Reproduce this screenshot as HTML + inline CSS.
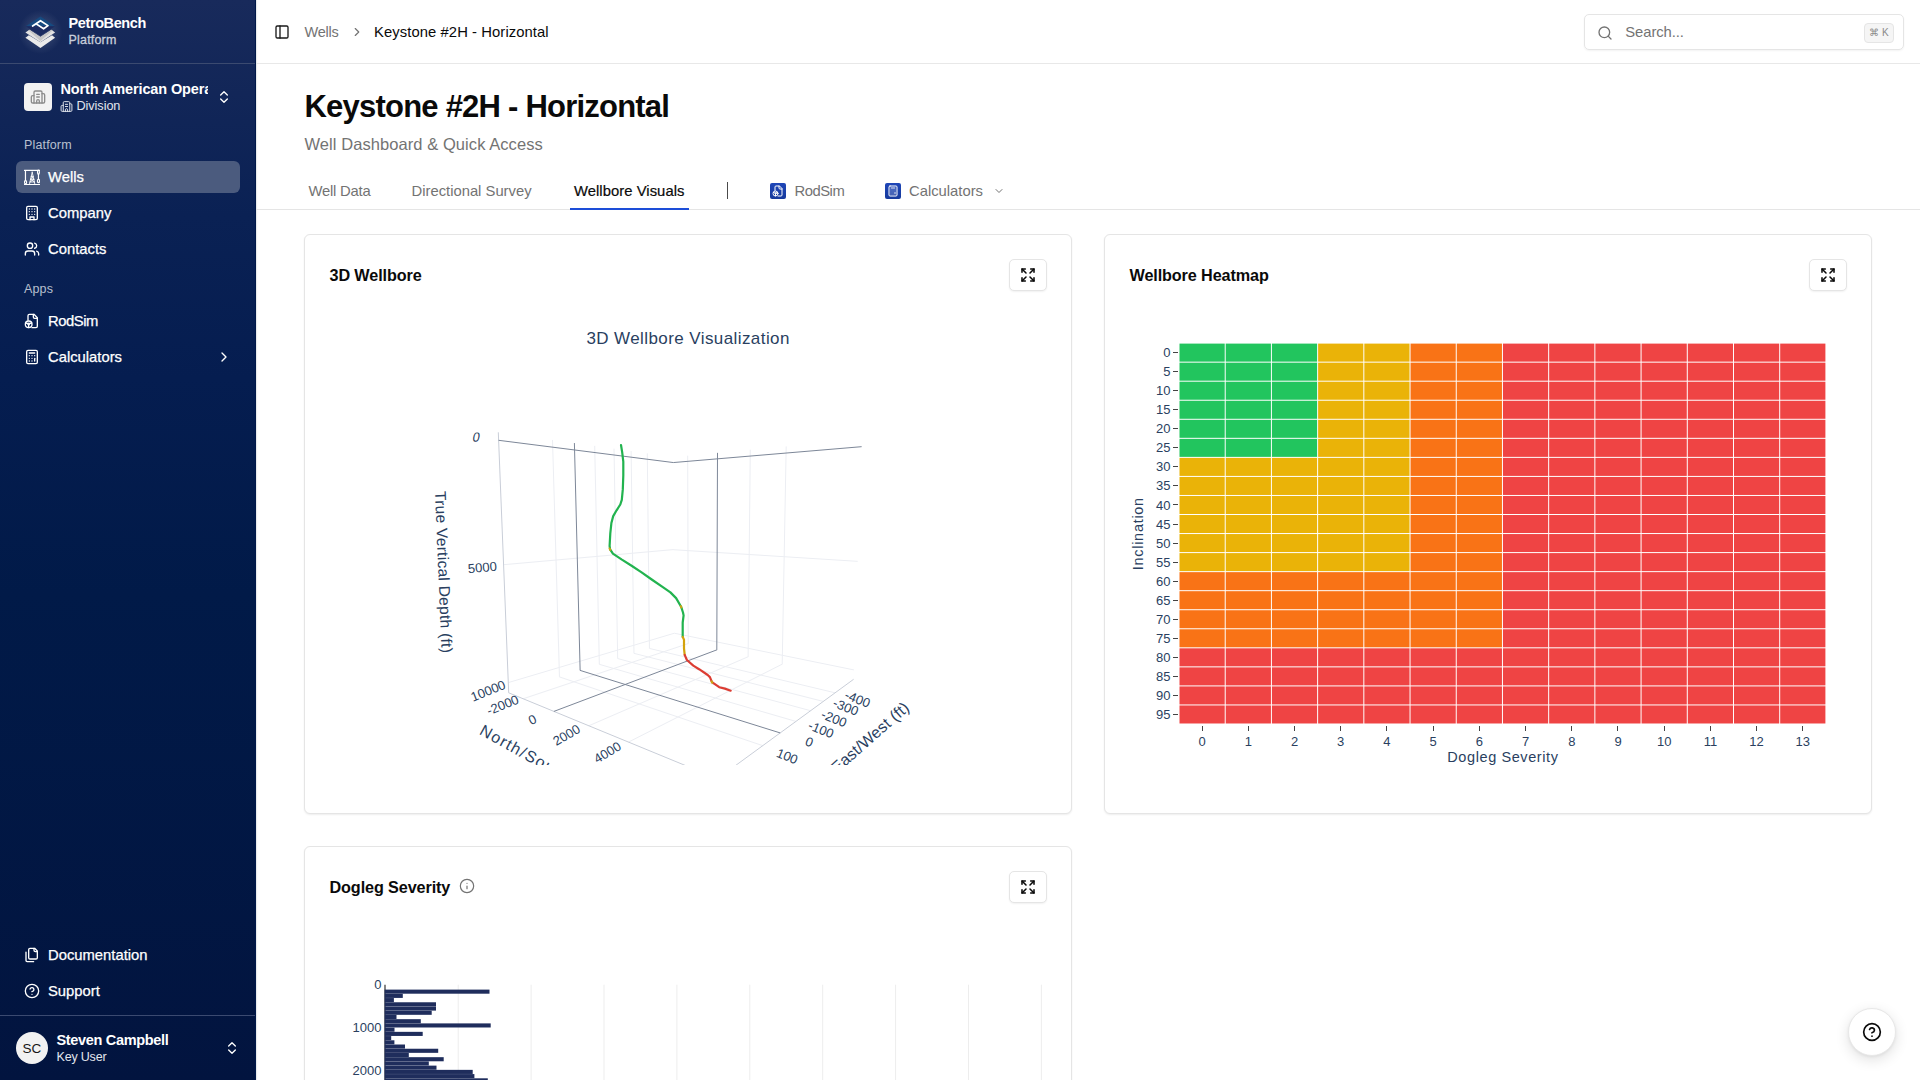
<!DOCTYPE html><html><head><meta charset="utf-8"><style>
*{box-sizing:border-box;margin:0;padding:0}
html,body{width:1920px;height:1080px;overflow:hidden;background:#fff;font-family:"Liberation Sans",sans-serif;color:#0a0a0a}
.abs{position:absolute}
svg{display:block}
#sb{position:absolute;left:0;top:0;width:256px;height:1080px;background:linear-gradient(180deg,#182a5b 0%,#0a2154 20%,#051d50 35%,#011a48 55%,#02143f 100%)}
#sbr{position:absolute;left:255px;top:0;width:1px;height:1080px;background:#001849;box-shadow:1px 0 1px rgba(20,30,60,.12)}
.sbsep{position:absolute;left:0;width:255px;height:1px;background:#3b4a70}
.nav{position:absolute;left:16px;width:224px;height:32px;border-radius:6px;color:#fff}
.ntx{position:absolute;left:48px;font-size:14.8px;letter-spacing:0;line-height:16px;color:#fff;white-space:nowrap;-webkit-text-stroke:.25px #fff}
.grp{position:absolute;left:24px;font-size:12.5px;letter-spacing:.15px;color:#b9c0cf;line-height:14px}
.card{position:absolute;background:#fff;border:1px solid #e5e5e5;border-radius:6px;box-shadow:0 1px 2px rgba(0,0,0,.07)}
.ctitle{position:absolute;font-size:16.2px;letter-spacing:-.11px;font-weight:700;line-height:18px;color:#0a0a0a;white-space:nowrap}
.xbtn{position:absolute;width:38px;height:32px;border:1px solid #e5e5e5;border-radius:5px;background:#fff;box-shadow:0 1px 2px rgba(0,0,0,.06)}
.tab{position:absolute;top:183px;font-size:14.8px;line-height:17px;color:#737373;white-space:nowrap}
</style></head><body>
<div id="sb"></div><div id="sbr"></div>
<svg class="abs" style="left:12px;top:6px" width="56" height="52" viewBox="12 6 56 52">
<defs><radialGradient id="glow" cx="40.5" cy="32" r="22" gradientUnits="userSpaceOnUse"><stop offset="0" stop-color="#ffffff" stop-opacity=".22"/><stop offset=".6" stop-color="#ffffff" stop-opacity=".08"/><stop offset="1" stop-color="#ffffff" stop-opacity="0"/></radialGradient></defs>
<circle cx="40.5" cy="32" r="22" fill="url(#glow)"/>
<polygon points="25.4,37.7 28.9,35.3 40.45,42.3 52,35.3 55.1,37.7 40.45,47.9" fill="#ebebeb"/>
<polygon points="25.4,32.4 29.4,29.7 40.45,36.9 51.5,29.7 55.1,32.4 40.45,42.2" fill="#e2e2e2"/>
<polygon points="29.4,29.7 40.45,36.9 51.5,29.7 52.5,30.4 40.45,41 28.4,30.4" fill="#c6c6c6"/>
<polygon points="40.45,16.5 55.1,26.3 25.8,26.3" fill="#164a80"/>
<polygon points="25.8,26.3 55.1,26.3 40.45,36.1" fill="#1b2b60"/>
<polyline points="32.6,26 40.5,20.7 48,25.6 43.6,28.8 36.6,24.1" fill="none" stroke="#fff" stroke-width="1.7" stroke-linejoin="round" stroke-linecap="round"/>
</svg>
<div class="abs" style="left:68.5px;top:15px;font-size:14.5px;font-weight:700;letter-spacing:-.39px;color:#fff;line-height:16px">PetroBench</div>
<div class="abs" style="left:68.5px;top:33.4px;font-size:12.5px;letter-spacing:.19px;color:#c8cedb;-webkit-text-stroke:.3px #c8cedb;line-height:14px">Platform</div>
<div class="sbsep" style="top:63px"></div>
<div class="abs" style="left:24px;top:83px;width:28px;height:28px;border-radius:4px;background:#f2f2f2"></div>
<svg class="abs" style="left:30px;top:89px" width="16" height="16" viewBox="0 0 24 24" fill="none" stroke="#8c8c8c" stroke-width="2" stroke-linecap="round" stroke-linejoin="round" ><path d="M10 12h4"/><path d="M10 8h4"/><path d="M14 21v-3a2 2 0 0 0-4 0v3"/><path d="M6 10H4a2 2 0 0 0-2 2v7a2 2 0 0 0 2 2h16a2 2 0 0 0 2-2V9a2 2 0 0 0-2-2h-2"/><path d="M6 21V5a2 2 0 0 1 2-2h8a2 2 0 0 1 2 2v16"/></svg>
<div class="abs" style="left:60.5px;top:81.3px;width:147.5px;overflow:hidden;white-space:nowrap;font-size:14.5px;font-weight:700;letter-spacing:-.12px;color:#fff;line-height:16px">North American Operations</div>
<svg class="abs" style="left:60px;top:100px" width="13" height="13" viewBox="0 0 24 24" fill="none" stroke="#dfe3ea" stroke-width="1.8" stroke-linecap="round" stroke-linejoin="round" ><path d="M10 12h4"/><path d="M10 8h4"/><path d="M14 21v-3a2 2 0 0 0-4 0v3"/><path d="M6 10H4a2 2 0 0 0-2 2v7a2 2 0 0 0 2 2h16a2 2 0 0 0 2-2V9a2 2 0 0 0-2-2h-2"/><path d="M6 21V5a2 2 0 0 1 2-2h8a2 2 0 0 1 2 2v16"/></svg>
<div class="abs" style="left:76.5px;top:98.5px;font-size:12.7px;letter-spacing:-.07px;color:#e2e6ee;line-height:14px">Division</div>
<svg class="abs" style="left:216px;top:89px" width="16" height="16" viewBox="0 0 24 24" fill="none" stroke="#fff" stroke-width="2" stroke-linecap="round" stroke-linejoin="round" ><path d="m7 15 5 5 5-5"/><path d="m7 9 5-5 5 5"/></svg>
<div class="grp" style="top:138.3px">Platform</div>
<div class="nav" style="top:161px;background:#4b5b7e"></div>
<svg class="abs" style="left:24px;top:169px" width="16" height="16" viewBox="0 0 24 24" fill="none" stroke="#fff" stroke-width="1.8" stroke-linecap="round" stroke-linejoin="round" ><path d="M0.5 2.2h23.5"/><path d="M2.2 2.5v14.8"/><ellipse cx="2.3" cy="19.8" rx="1.6" ry="2.4"/><ellipse cx="21.7" cy="4.8" rx="1.4" ry="3"/><path d="M21.7 7.8v7.6"/><ellipse cx="21.7" cy="18" rx="1.6" ry="2.6"/><path d="M12.3 4.7 8.3 22.3M12.3 4.7 16.2 22.3M10.9 11h2.8M9.9 15.5h4.8M9 19.5h6.6M10.9 11l3.8 4.5M13.7 11l-3.8 4.5M9.9 15.5l5.7 4M14.7 15.5l-5.7 4" stroke-width="1.3"/><path d="M0.5 23.3h23.5"/></svg>
<div class="ntx" style="top:169px;letter-spacing:0">Wells</div>
<svg class="abs" style="left:24px;top:205px" width="16" height="16" viewBox="0 0 24 24" fill="none" stroke="#fff" stroke-width="2" stroke-linecap="round" stroke-linejoin="round" ><rect width="16" height="20" x="4" y="2" rx="2" ry="2"/><path d="M9 22v-4h6v4"/><path d="M8 6h.01"/><path d="M16 6h.01"/><path d="M12 6h.01"/><path d="M12 10h.01"/><path d="M12 14h.01"/><path d="M16 10h.01"/><path d="M16 14h.01"/><path d="M8 10h.01"/><path d="M8 14h.01"/></svg>
<div class="ntx" style="top:205px;letter-spacing:0">Company</div>
<svg class="abs" style="left:24px;top:241px" width="16" height="16" viewBox="0 0 24 24" fill="none" stroke="#fff" stroke-width="2" stroke-linecap="round" stroke-linejoin="round" ><path d="M16 21v-2a4 4 0 0 0-4-4H6a4 4 0 0 0-4 4v2"/><circle cx="9" cy="7" r="4"/><path d="M22 21v-2a4 4 0 0 0-3-3.87"/><path d="M16 3.13a4 4 0 0 1 0 7.75"/></svg>
<div class="ntx" style="top:241px;letter-spacing:0">Contacts</div>
<svg class="abs" style="left:24px;top:313px" width="16" height="16" viewBox="0 0 24 24" fill="none" stroke="#fff" stroke-width="2" stroke-linecap="round" stroke-linejoin="round" ><path d="M12 22h6a2 2 0 0 0 2-2V7l-5-5H8a2 2 0 0 0-2 2v7"/><path d="M14 2v4a2 2 0 0 0 2 2h4"/><circle cx="7" cy="17" r="5"/><circle cx="7" cy="16.5" r="1.2"/><path d="M7 17.7v4.1M5.9 16 2.6 15M8.1 16l3.3-1"/></svg>
<div class="ntx" style="top:313px;letter-spacing:-.45px">RodSim</div>
<svg class="abs" style="left:24px;top:349px" width="16" height="16" viewBox="0 0 24 24" fill="none" stroke="#fff" stroke-width="2" stroke-linecap="round" stroke-linejoin="round" ><rect width="16" height="20" x="4" y="2" rx="2"/><line x1="8" x2="16" y1="6" y2="6"/><line x1="16" x2="16" y1="14" y2="18"/><path d="M16 10h.01"/><path d="M12 10h.01"/><path d="M8 10h.01"/><path d="M12 14h.01"/><path d="M8 14h.01"/><path d="M12 18h.01"/><path d="M8 18h.01"/></svg>
<div class="ntx" style="top:349px;letter-spacing:0">Calculators</div>
<svg class="abs" style="left:24px;top:947px" width="16" height="16" viewBox="0 0 24 24" fill="none" stroke="#fff" stroke-width="2" stroke-linecap="round" stroke-linejoin="round" ><path d="M20 7h-3a2 2 0 0 1-2-2V2"/><path d="M9 18a2 2 0 0 1-2-2V4a2 2 0 0 1 2-2h7l4 4v10a2 2 0 0 1-2 2Z"/><path d="M3 7.6v12.8A1.6 1.6 0 0 0 4.6 22h9.8"/></svg>
<div class="ntx" style="top:947px;letter-spacing:0">Documentation</div>
<svg class="abs" style="left:24px;top:983px" width="16" height="16" viewBox="0 0 24 24" fill="none" stroke="#fff" stroke-width="2" stroke-linecap="round" stroke-linejoin="round" ><circle cx="12" cy="12" r="10"/><path d="M9.09 9a3 3 0 0 1 5.83 1c0 2-3 3-3 3"/><path d="M12 17h.01"/></svg>
<div class="ntx" style="top:983px;letter-spacing:0">Support</div>
<div class="grp" style="top:282.2px">Apps</div>
<svg class="abs" style="left:216px;top:349px" width="16" height="16" viewBox="0 0 24 24" fill="none" stroke="#fff" stroke-width="2" stroke-linecap="round" stroke-linejoin="round" ><path d="m9 18 6-6-6-6"/></svg>
<div class="sbsep" style="top:1015px"></div>
<div class="abs" style="left:16px;top:1032px;width:32px;height:32px;border-radius:50%;background:#f2f2f2;color:#171717;font-size:13.5px;line-height:33px;text-align:center;letter-spacing:.1px">SC</div>
<div class="abs" style="left:56.5px;top:1032px;font-size:14.5px;font-weight:700;letter-spacing:-.33px;color:#fff;line-height:16px">Steven Campbell</div>
<div class="abs" style="left:56.5px;top:1050px;font-size:12.5px;letter-spacing:-.19px;color:#e2e6ee;line-height:14px">Key User</div>
<svg class="abs" style="left:224px;top:1040px" width="16" height="16" viewBox="0 0 24 24" fill="none" stroke="#fff" stroke-width="2" stroke-linecap="round" stroke-linejoin="round" ><path d="m7 15 5 5 5-5"/><path d="m7 9 5-5 5 5"/></svg>
<div class="abs" style="left:256px;top:63px;width:1664px;height:1px;background:#e8e8e8"></div>
<svg class="abs" style="left:274px;top:24px" width="16" height="16" viewBox="0 0 24 24" fill="none" stroke="#1a1a1a" stroke-width="2" stroke-linecap="round" stroke-linejoin="round" ><rect width="18" height="18" x="3" y="3" rx="2"/><path d="M9 3v18"/></svg>
<div class="abs" style="left:304.5px;top:23.7px;font-size:14.5px;letter-spacing:-.25px;color:#737373;line-height:16px">Wells</div>
<svg class="abs" style="left:349.5px;top:25.3px" width="14" height="14" viewBox="0 0 24 24" fill="none" stroke="#737373" stroke-width="2" stroke-linecap="round" stroke-linejoin="round" ><path d="m9 18 6-6-6-6"/></svg>
<div class="abs" style="left:374px;top:23.7px;font-size:14.8px;letter-spacing:.08px;color:#0a0a0a;line-height:16px">Keystone #2H - Horizontal</div>
<div class="abs" style="left:1584px;top:14px;width:320px;height:36px;border:1px solid #e5e5e5;border-radius:5px;box-shadow:0 1px 2px rgba(0,0,0,.05)"></div>
<svg class="abs" style="left:1596.5px;top:24.5px" width="16" height="16" viewBox="0 0 24 24" fill="none" stroke="#737373" stroke-width="2" stroke-linecap="round" stroke-linejoin="round" ><circle cx="11" cy="11" r="8"/><path d="m21 21-4.3-4.3"/></svg>
<div class="abs" style="left:1625.3px;top:24px;font-size:14.8px;letter-spacing:-.08px;color:#737373;line-height:16px">Search...</div>
<div class="abs" style="left:1864px;top:23px;width:30px;height:20px;border:1px solid #e5e5e5;border-radius:4px;background:#f5f5f5;color:#8a8a8a;font-size:10px;line-height:18px;text-align:center;letter-spacing:0">&#8984; K</div>
<div class="abs" style="left:304.5px;top:90.2px;font-size:31px;font-weight:700;line-height:34px;letter-spacing:-.78px">Keystone #2H - Horizontal</div>
<div class="abs" style="left:304.5px;top:135px;font-size:16.5px;letter-spacing:.07px;color:#737373;line-height:18px">Well Dashboard &amp; Quick Access</div>
<div class="abs" style="left:256px;top:209px;width:1664px;height:1px;background:#e5e5e5"></div>
<div class="tab" style="left:308.5px;letter-spacing:-.22px">Well Data</div>
<div class="tab" style="left:411.5px">Directional Survey</div>
<div class="tab" style="left:574px;color:#0a0a0a;letter-spacing:.05px;-webkit-text-stroke:.2px #0a0a0a">Wellbore Visuals</div>
<div class="abs" style="left:569.5px;top:207.5px;width:119.5px;height:2px;background:#1d4ed8"></div>
<div class="abs" style="left:726.5px;top:182px;width:1.3px;height:16.5px;background:#4a4a4a"></div>
<div class="abs" style="left:770px;top:182.5px;width:16px;height:16px;border-radius:2px;background:linear-gradient(180deg,#1e46b8,#163a9c)"></div>
<svg class="abs" style="left:772px;top:184.5px" width="12" height="12" viewBox="0 0 24 24" fill="none" stroke="#fff" stroke-width="2" stroke-linecap="round" stroke-linejoin="round" ><path d="M12 22h6a2 2 0 0 0 2-2V7l-5-5H8a2 2 0 0 0-2 2v7"/><path d="M14 2v4a2 2 0 0 0 2 2h4"/><circle cx="7" cy="17" r="5"/><circle cx="7" cy="16.5" r="1.2"/><path d="M7 17.7v4.1M5.9 16 2.6 15M8.1 16l3.3-1"/></svg>
<div class="tab" style="left:794.5px;letter-spacing:-.48px">RodSim</div>
<div class="abs" style="left:884.5px;top:182.5px;width:16px;height:16px;border-radius:2px;background:linear-gradient(180deg,#1e46b8,#163a9c)"></div>
<svg class="abs" style="left:886.5px;top:184.5px" width="12" height="12" viewBox="0 0 24 24" fill="none" stroke="#fff" stroke-width="2" stroke-linecap="round" stroke-linejoin="round" ><rect width="16" height="20" x="4" y="2" rx="2"/><line x1="8" x2="16" y1="6" y2="6"/><line x1="16" x2="16" y1="14" y2="18"/><path d="M16 10h.01"/><path d="M12 10h.01"/><path d="M8 10h.01"/><path d="M12 14h.01"/><path d="M8 14h.01"/><path d="M12 18h.01"/><path d="M8 18h.01"/></svg>
<div class="tab" style="left:909px">Calculators</div>
<svg class="abs" style="left:993.3px;top:184.8px" width="12" height="12" viewBox="0 0 24 24" fill="none" stroke="#737373" stroke-width="2" stroke-linecap="round" stroke-linejoin="round" ><path d="m6 9 6 6 6-6"/></svg>
<div class="card" style="left:304px;top:234px;width:768px;height:580px"></div>
<div class="ctitle" style="left:329.5px;top:265.9px">3D Wellbore</div>
<div class="xbtn" style="left:1009px;top:259px"></div>
<svg class="abs" style="left:1020px;top:267px" width="16" height="16" viewBox="0 0 24 24" fill="none" stroke="#0a0a0a" stroke-width="2.3" stroke-linecap="round" stroke-linejoin="round" ><path d="m15 15 6 6"/><path d="m15 9 6-6"/><path d="M21 16v5h-5"/><path d="M21 8V3h-5"/><path d="M3 16v5h5"/><path d="m3 21 6-6"/><path d="M3 8V3h5"/><path d="M9 9 3 3"/></svg>
<div class="card" style="left:1104px;top:234px;width:768px;height:580px"></div>
<div class="ctitle" style="left:1129.5px;top:265.9px">Wellbore Heatmap</div>
<div class="xbtn" style="left:1809px;top:259px"></div>
<svg class="abs" style="left:1820px;top:267px" width="16" height="16" viewBox="0 0 24 24" fill="none" stroke="#0a0a0a" stroke-width="2.3" stroke-linecap="round" stroke-linejoin="round" ><path d="m15 15 6 6"/><path d="m15 9 6-6"/><path d="M21 16v5h-5"/><path d="M21 8V3h-5"/><path d="M3 16v5h5"/><path d="m3 21 6-6"/><path d="M3 8V3h5"/><path d="M9 9 3 3"/></svg>
<div class="card" style="left:304px;top:846px;width:768px;height:300px"></div>
<div class="ctitle" style="left:329.5px;top:877.9px">Dogleg Severity</div>
<div class="xbtn" style="left:1009px;top:871px"></div>
<svg class="abs" style="left:1020px;top:879px" width="16" height="16" viewBox="0 0 24 24" fill="none" stroke="#0a0a0a" stroke-width="2.3" stroke-linecap="round" stroke-linejoin="round" ><path d="m15 15 6 6"/><path d="m15 9 6-6"/><path d="M21 16v5h-5"/><path d="M21 8V3h-5"/><path d="M3 16v5h5"/><path d="m3 21 6-6"/><path d="M3 8V3h5"/><path d="M9 9 3 3"/></svg>
<svg class="abs" style="left:459px;top:878px" width="16" height="16" viewBox="0 0 24 24" fill="none" stroke="#737373" stroke-width="1.8" stroke-linecap="round" stroke-linejoin="round" ><circle cx="12" cy="12" r="10"/><path d="M12 16v-4"/><path d="M12 8h.01"/></svg>
<svg class="abs" style="left:0;top:0" width="1920" height="1080" viewBox="0 0 1920 1080" font-family="Liberation Sans, sans-serif" fill="#2a3f5f">
<g id="heat">
<rect x="1179.0" y="343.1" width="646.9" height="380.9" fill="#fff"/>
<rect x="1179.50" y="343.60" width="45.21" height="18.04" fill="#22c55e"/>
<rect x="1225.71" y="343.60" width="45.21" height="18.04" fill="#22c55e"/>
<rect x="1271.91" y="343.60" width="45.21" height="18.04" fill="#22c55e"/>
<rect x="1318.12" y="343.60" width="45.21" height="18.04" fill="#eab308"/>
<rect x="1364.33" y="343.60" width="45.21" height="18.04" fill="#eab308"/>
<rect x="1410.54" y="343.60" width="45.21" height="18.04" fill="#f97316"/>
<rect x="1456.74" y="343.60" width="45.21" height="18.04" fill="#f97316"/>
<rect x="1502.95" y="343.60" width="45.21" height="18.04" fill="#ef4444"/>
<rect x="1549.16" y="343.60" width="45.21" height="18.04" fill="#ef4444"/>
<rect x="1595.36" y="343.60" width="45.21" height="18.04" fill="#ef4444"/>
<rect x="1641.57" y="343.60" width="45.21" height="18.04" fill="#ef4444"/>
<rect x="1687.78" y="343.60" width="45.21" height="18.04" fill="#ef4444"/>
<rect x="1733.99" y="343.60" width="45.21" height="18.04" fill="#ef4444"/>
<rect x="1780.19" y="343.60" width="45.21" height="18.04" fill="#ef4444"/>
<rect x="1179.50" y="362.65" width="45.21" height="18.04" fill="#22c55e"/>
<rect x="1225.71" y="362.65" width="45.21" height="18.04" fill="#22c55e"/>
<rect x="1271.91" y="362.65" width="45.21" height="18.04" fill="#22c55e"/>
<rect x="1318.12" y="362.65" width="45.21" height="18.04" fill="#eab308"/>
<rect x="1364.33" y="362.65" width="45.21" height="18.04" fill="#eab308"/>
<rect x="1410.54" y="362.65" width="45.21" height="18.04" fill="#f97316"/>
<rect x="1456.74" y="362.65" width="45.21" height="18.04" fill="#f97316"/>
<rect x="1502.95" y="362.65" width="45.21" height="18.04" fill="#ef4444"/>
<rect x="1549.16" y="362.65" width="45.21" height="18.04" fill="#ef4444"/>
<rect x="1595.36" y="362.65" width="45.21" height="18.04" fill="#ef4444"/>
<rect x="1641.57" y="362.65" width="45.21" height="18.04" fill="#ef4444"/>
<rect x="1687.78" y="362.65" width="45.21" height="18.04" fill="#ef4444"/>
<rect x="1733.99" y="362.65" width="45.21" height="18.04" fill="#ef4444"/>
<rect x="1780.19" y="362.65" width="45.21" height="18.04" fill="#ef4444"/>
<rect x="1179.50" y="381.69" width="45.21" height="18.04" fill="#22c55e"/>
<rect x="1225.71" y="381.69" width="45.21" height="18.04" fill="#22c55e"/>
<rect x="1271.91" y="381.69" width="45.21" height="18.04" fill="#22c55e"/>
<rect x="1318.12" y="381.69" width="45.21" height="18.04" fill="#eab308"/>
<rect x="1364.33" y="381.69" width="45.21" height="18.04" fill="#eab308"/>
<rect x="1410.54" y="381.69" width="45.21" height="18.04" fill="#f97316"/>
<rect x="1456.74" y="381.69" width="45.21" height="18.04" fill="#f97316"/>
<rect x="1502.95" y="381.69" width="45.21" height="18.04" fill="#ef4444"/>
<rect x="1549.16" y="381.69" width="45.21" height="18.04" fill="#ef4444"/>
<rect x="1595.36" y="381.69" width="45.21" height="18.04" fill="#ef4444"/>
<rect x="1641.57" y="381.69" width="45.21" height="18.04" fill="#ef4444"/>
<rect x="1687.78" y="381.69" width="45.21" height="18.04" fill="#ef4444"/>
<rect x="1733.99" y="381.69" width="45.21" height="18.04" fill="#ef4444"/>
<rect x="1780.19" y="381.69" width="45.21" height="18.04" fill="#ef4444"/>
<rect x="1179.50" y="400.74" width="45.21" height="18.04" fill="#22c55e"/>
<rect x="1225.71" y="400.74" width="45.21" height="18.04" fill="#22c55e"/>
<rect x="1271.91" y="400.74" width="45.21" height="18.04" fill="#22c55e"/>
<rect x="1318.12" y="400.74" width="45.21" height="18.04" fill="#eab308"/>
<rect x="1364.33" y="400.74" width="45.21" height="18.04" fill="#eab308"/>
<rect x="1410.54" y="400.74" width="45.21" height="18.04" fill="#f97316"/>
<rect x="1456.74" y="400.74" width="45.21" height="18.04" fill="#f97316"/>
<rect x="1502.95" y="400.74" width="45.21" height="18.04" fill="#ef4444"/>
<rect x="1549.16" y="400.74" width="45.21" height="18.04" fill="#ef4444"/>
<rect x="1595.36" y="400.74" width="45.21" height="18.04" fill="#ef4444"/>
<rect x="1641.57" y="400.74" width="45.21" height="18.04" fill="#ef4444"/>
<rect x="1687.78" y="400.74" width="45.21" height="18.04" fill="#ef4444"/>
<rect x="1733.99" y="400.74" width="45.21" height="18.04" fill="#ef4444"/>
<rect x="1780.19" y="400.74" width="45.21" height="18.04" fill="#ef4444"/>
<rect x="1179.50" y="419.78" width="45.21" height="18.04" fill="#22c55e"/>
<rect x="1225.71" y="419.78" width="45.21" height="18.04" fill="#22c55e"/>
<rect x="1271.91" y="419.78" width="45.21" height="18.04" fill="#22c55e"/>
<rect x="1318.12" y="419.78" width="45.21" height="18.04" fill="#eab308"/>
<rect x="1364.33" y="419.78" width="45.21" height="18.04" fill="#eab308"/>
<rect x="1410.54" y="419.78" width="45.21" height="18.04" fill="#f97316"/>
<rect x="1456.74" y="419.78" width="45.21" height="18.04" fill="#f97316"/>
<rect x="1502.95" y="419.78" width="45.21" height="18.04" fill="#ef4444"/>
<rect x="1549.16" y="419.78" width="45.21" height="18.04" fill="#ef4444"/>
<rect x="1595.36" y="419.78" width="45.21" height="18.04" fill="#ef4444"/>
<rect x="1641.57" y="419.78" width="45.21" height="18.04" fill="#ef4444"/>
<rect x="1687.78" y="419.78" width="45.21" height="18.04" fill="#ef4444"/>
<rect x="1733.99" y="419.78" width="45.21" height="18.04" fill="#ef4444"/>
<rect x="1780.19" y="419.78" width="45.21" height="18.04" fill="#ef4444"/>
<rect x="1179.50" y="438.83" width="45.21" height="18.04" fill="#22c55e"/>
<rect x="1225.71" y="438.83" width="45.21" height="18.04" fill="#22c55e"/>
<rect x="1271.91" y="438.83" width="45.21" height="18.04" fill="#22c55e"/>
<rect x="1318.12" y="438.83" width="45.21" height="18.04" fill="#eab308"/>
<rect x="1364.33" y="438.83" width="45.21" height="18.04" fill="#eab308"/>
<rect x="1410.54" y="438.83" width="45.21" height="18.04" fill="#f97316"/>
<rect x="1456.74" y="438.83" width="45.21" height="18.04" fill="#f97316"/>
<rect x="1502.95" y="438.83" width="45.21" height="18.04" fill="#ef4444"/>
<rect x="1549.16" y="438.83" width="45.21" height="18.04" fill="#ef4444"/>
<rect x="1595.36" y="438.83" width="45.21" height="18.04" fill="#ef4444"/>
<rect x="1641.57" y="438.83" width="45.21" height="18.04" fill="#ef4444"/>
<rect x="1687.78" y="438.83" width="45.21" height="18.04" fill="#ef4444"/>
<rect x="1733.99" y="438.83" width="45.21" height="18.04" fill="#ef4444"/>
<rect x="1780.19" y="438.83" width="45.21" height="18.04" fill="#ef4444"/>
<rect x="1179.50" y="457.87" width="45.21" height="18.04" fill="#eab308"/>
<rect x="1225.71" y="457.87" width="45.21" height="18.04" fill="#eab308"/>
<rect x="1271.91" y="457.87" width="45.21" height="18.04" fill="#eab308"/>
<rect x="1318.12" y="457.87" width="45.21" height="18.04" fill="#eab308"/>
<rect x="1364.33" y="457.87" width="45.21" height="18.04" fill="#eab308"/>
<rect x="1410.54" y="457.87" width="45.21" height="18.04" fill="#f97316"/>
<rect x="1456.74" y="457.87" width="45.21" height="18.04" fill="#f97316"/>
<rect x="1502.95" y="457.87" width="45.21" height="18.04" fill="#ef4444"/>
<rect x="1549.16" y="457.87" width="45.21" height="18.04" fill="#ef4444"/>
<rect x="1595.36" y="457.87" width="45.21" height="18.04" fill="#ef4444"/>
<rect x="1641.57" y="457.87" width="45.21" height="18.04" fill="#ef4444"/>
<rect x="1687.78" y="457.87" width="45.21" height="18.04" fill="#ef4444"/>
<rect x="1733.99" y="457.87" width="45.21" height="18.04" fill="#ef4444"/>
<rect x="1780.19" y="457.87" width="45.21" height="18.04" fill="#ef4444"/>
<rect x="1179.50" y="476.92" width="45.21" height="18.04" fill="#eab308"/>
<rect x="1225.71" y="476.92" width="45.21" height="18.04" fill="#eab308"/>
<rect x="1271.91" y="476.92" width="45.21" height="18.04" fill="#eab308"/>
<rect x="1318.12" y="476.92" width="45.21" height="18.04" fill="#eab308"/>
<rect x="1364.33" y="476.92" width="45.21" height="18.04" fill="#eab308"/>
<rect x="1410.54" y="476.92" width="45.21" height="18.04" fill="#f97316"/>
<rect x="1456.74" y="476.92" width="45.21" height="18.04" fill="#f97316"/>
<rect x="1502.95" y="476.92" width="45.21" height="18.04" fill="#ef4444"/>
<rect x="1549.16" y="476.92" width="45.21" height="18.04" fill="#ef4444"/>
<rect x="1595.36" y="476.92" width="45.21" height="18.04" fill="#ef4444"/>
<rect x="1641.57" y="476.92" width="45.21" height="18.04" fill="#ef4444"/>
<rect x="1687.78" y="476.92" width="45.21" height="18.04" fill="#ef4444"/>
<rect x="1733.99" y="476.92" width="45.21" height="18.04" fill="#ef4444"/>
<rect x="1780.19" y="476.92" width="45.21" height="18.04" fill="#ef4444"/>
<rect x="1179.50" y="495.96" width="45.21" height="18.04" fill="#eab308"/>
<rect x="1225.71" y="495.96" width="45.21" height="18.04" fill="#eab308"/>
<rect x="1271.91" y="495.96" width="45.21" height="18.04" fill="#eab308"/>
<rect x="1318.12" y="495.96" width="45.21" height="18.04" fill="#eab308"/>
<rect x="1364.33" y="495.96" width="45.21" height="18.04" fill="#eab308"/>
<rect x="1410.54" y="495.96" width="45.21" height="18.04" fill="#f97316"/>
<rect x="1456.74" y="495.96" width="45.21" height="18.04" fill="#f97316"/>
<rect x="1502.95" y="495.96" width="45.21" height="18.04" fill="#ef4444"/>
<rect x="1549.16" y="495.96" width="45.21" height="18.04" fill="#ef4444"/>
<rect x="1595.36" y="495.96" width="45.21" height="18.04" fill="#ef4444"/>
<rect x="1641.57" y="495.96" width="45.21" height="18.04" fill="#ef4444"/>
<rect x="1687.78" y="495.96" width="45.21" height="18.04" fill="#ef4444"/>
<rect x="1733.99" y="495.96" width="45.21" height="18.04" fill="#ef4444"/>
<rect x="1780.19" y="495.96" width="45.21" height="18.04" fill="#ef4444"/>
<rect x="1179.50" y="515.00" width="45.21" height="18.04" fill="#eab308"/>
<rect x="1225.71" y="515.00" width="45.21" height="18.04" fill="#eab308"/>
<rect x="1271.91" y="515.00" width="45.21" height="18.04" fill="#eab308"/>
<rect x="1318.12" y="515.00" width="45.21" height="18.04" fill="#eab308"/>
<rect x="1364.33" y="515.00" width="45.21" height="18.04" fill="#eab308"/>
<rect x="1410.54" y="515.00" width="45.21" height="18.04" fill="#f97316"/>
<rect x="1456.74" y="515.00" width="45.21" height="18.04" fill="#f97316"/>
<rect x="1502.95" y="515.00" width="45.21" height="18.04" fill="#ef4444"/>
<rect x="1549.16" y="515.00" width="45.21" height="18.04" fill="#ef4444"/>
<rect x="1595.36" y="515.00" width="45.21" height="18.04" fill="#ef4444"/>
<rect x="1641.57" y="515.00" width="45.21" height="18.04" fill="#ef4444"/>
<rect x="1687.78" y="515.00" width="45.21" height="18.04" fill="#ef4444"/>
<rect x="1733.99" y="515.00" width="45.21" height="18.04" fill="#ef4444"/>
<rect x="1780.19" y="515.00" width="45.21" height="18.04" fill="#ef4444"/>
<rect x="1179.50" y="534.05" width="45.21" height="18.04" fill="#eab308"/>
<rect x="1225.71" y="534.05" width="45.21" height="18.04" fill="#eab308"/>
<rect x="1271.91" y="534.05" width="45.21" height="18.04" fill="#eab308"/>
<rect x="1318.12" y="534.05" width="45.21" height="18.04" fill="#eab308"/>
<rect x="1364.33" y="534.05" width="45.21" height="18.04" fill="#eab308"/>
<rect x="1410.54" y="534.05" width="45.21" height="18.04" fill="#f97316"/>
<rect x="1456.74" y="534.05" width="45.21" height="18.04" fill="#f97316"/>
<rect x="1502.95" y="534.05" width="45.21" height="18.04" fill="#ef4444"/>
<rect x="1549.16" y="534.05" width="45.21" height="18.04" fill="#ef4444"/>
<rect x="1595.36" y="534.05" width="45.21" height="18.04" fill="#ef4444"/>
<rect x="1641.57" y="534.05" width="45.21" height="18.04" fill="#ef4444"/>
<rect x="1687.78" y="534.05" width="45.21" height="18.04" fill="#ef4444"/>
<rect x="1733.99" y="534.05" width="45.21" height="18.04" fill="#ef4444"/>
<rect x="1780.19" y="534.05" width="45.21" height="18.04" fill="#ef4444"/>
<rect x="1179.50" y="553.10" width="45.21" height="18.04" fill="#eab308"/>
<rect x="1225.71" y="553.10" width="45.21" height="18.04" fill="#eab308"/>
<rect x="1271.91" y="553.10" width="45.21" height="18.04" fill="#eab308"/>
<rect x="1318.12" y="553.10" width="45.21" height="18.04" fill="#eab308"/>
<rect x="1364.33" y="553.10" width="45.21" height="18.04" fill="#eab308"/>
<rect x="1410.54" y="553.10" width="45.21" height="18.04" fill="#f97316"/>
<rect x="1456.74" y="553.10" width="45.21" height="18.04" fill="#f97316"/>
<rect x="1502.95" y="553.10" width="45.21" height="18.04" fill="#ef4444"/>
<rect x="1549.16" y="553.10" width="45.21" height="18.04" fill="#ef4444"/>
<rect x="1595.36" y="553.10" width="45.21" height="18.04" fill="#ef4444"/>
<rect x="1641.57" y="553.10" width="45.21" height="18.04" fill="#ef4444"/>
<rect x="1687.78" y="553.10" width="45.21" height="18.04" fill="#ef4444"/>
<rect x="1733.99" y="553.10" width="45.21" height="18.04" fill="#ef4444"/>
<rect x="1780.19" y="553.10" width="45.21" height="18.04" fill="#ef4444"/>
<rect x="1179.50" y="572.14" width="45.21" height="18.04" fill="#f97316"/>
<rect x="1225.71" y="572.14" width="45.21" height="18.04" fill="#f97316"/>
<rect x="1271.91" y="572.14" width="45.21" height="18.04" fill="#f97316"/>
<rect x="1318.12" y="572.14" width="45.21" height="18.04" fill="#f97316"/>
<rect x="1364.33" y="572.14" width="45.21" height="18.04" fill="#f97316"/>
<rect x="1410.54" y="572.14" width="45.21" height="18.04" fill="#f97316"/>
<rect x="1456.74" y="572.14" width="45.21" height="18.04" fill="#f97316"/>
<rect x="1502.95" y="572.14" width="45.21" height="18.04" fill="#ef4444"/>
<rect x="1549.16" y="572.14" width="45.21" height="18.04" fill="#ef4444"/>
<rect x="1595.36" y="572.14" width="45.21" height="18.04" fill="#ef4444"/>
<rect x="1641.57" y="572.14" width="45.21" height="18.04" fill="#ef4444"/>
<rect x="1687.78" y="572.14" width="45.21" height="18.04" fill="#ef4444"/>
<rect x="1733.99" y="572.14" width="45.21" height="18.04" fill="#ef4444"/>
<rect x="1780.19" y="572.14" width="45.21" height="18.04" fill="#ef4444"/>
<rect x="1179.50" y="591.18" width="45.21" height="18.04" fill="#f97316"/>
<rect x="1225.71" y="591.18" width="45.21" height="18.04" fill="#f97316"/>
<rect x="1271.91" y="591.18" width="45.21" height="18.04" fill="#f97316"/>
<rect x="1318.12" y="591.18" width="45.21" height="18.04" fill="#f97316"/>
<rect x="1364.33" y="591.18" width="45.21" height="18.04" fill="#f97316"/>
<rect x="1410.54" y="591.18" width="45.21" height="18.04" fill="#f97316"/>
<rect x="1456.74" y="591.18" width="45.21" height="18.04" fill="#f97316"/>
<rect x="1502.95" y="591.18" width="45.21" height="18.04" fill="#ef4444"/>
<rect x="1549.16" y="591.18" width="45.21" height="18.04" fill="#ef4444"/>
<rect x="1595.36" y="591.18" width="45.21" height="18.04" fill="#ef4444"/>
<rect x="1641.57" y="591.18" width="45.21" height="18.04" fill="#ef4444"/>
<rect x="1687.78" y="591.18" width="45.21" height="18.04" fill="#ef4444"/>
<rect x="1733.99" y="591.18" width="45.21" height="18.04" fill="#ef4444"/>
<rect x="1780.19" y="591.18" width="45.21" height="18.04" fill="#ef4444"/>
<rect x="1179.50" y="610.23" width="45.21" height="18.04" fill="#f97316"/>
<rect x="1225.71" y="610.23" width="45.21" height="18.04" fill="#f97316"/>
<rect x="1271.91" y="610.23" width="45.21" height="18.04" fill="#f97316"/>
<rect x="1318.12" y="610.23" width="45.21" height="18.04" fill="#f97316"/>
<rect x="1364.33" y="610.23" width="45.21" height="18.04" fill="#f97316"/>
<rect x="1410.54" y="610.23" width="45.21" height="18.04" fill="#f97316"/>
<rect x="1456.74" y="610.23" width="45.21" height="18.04" fill="#f97316"/>
<rect x="1502.95" y="610.23" width="45.21" height="18.04" fill="#ef4444"/>
<rect x="1549.16" y="610.23" width="45.21" height="18.04" fill="#ef4444"/>
<rect x="1595.36" y="610.23" width="45.21" height="18.04" fill="#ef4444"/>
<rect x="1641.57" y="610.23" width="45.21" height="18.04" fill="#ef4444"/>
<rect x="1687.78" y="610.23" width="45.21" height="18.04" fill="#ef4444"/>
<rect x="1733.99" y="610.23" width="45.21" height="18.04" fill="#ef4444"/>
<rect x="1780.19" y="610.23" width="45.21" height="18.04" fill="#ef4444"/>
<rect x="1179.50" y="629.27" width="45.21" height="18.04" fill="#f97316"/>
<rect x="1225.71" y="629.27" width="45.21" height="18.04" fill="#f97316"/>
<rect x="1271.91" y="629.27" width="45.21" height="18.04" fill="#f97316"/>
<rect x="1318.12" y="629.27" width="45.21" height="18.04" fill="#f97316"/>
<rect x="1364.33" y="629.27" width="45.21" height="18.04" fill="#f97316"/>
<rect x="1410.54" y="629.27" width="45.21" height="18.04" fill="#f97316"/>
<rect x="1456.74" y="629.27" width="45.21" height="18.04" fill="#f97316"/>
<rect x="1502.95" y="629.27" width="45.21" height="18.04" fill="#ef4444"/>
<rect x="1549.16" y="629.27" width="45.21" height="18.04" fill="#ef4444"/>
<rect x="1595.36" y="629.27" width="45.21" height="18.04" fill="#ef4444"/>
<rect x="1641.57" y="629.27" width="45.21" height="18.04" fill="#ef4444"/>
<rect x="1687.78" y="629.27" width="45.21" height="18.04" fill="#ef4444"/>
<rect x="1733.99" y="629.27" width="45.21" height="18.04" fill="#ef4444"/>
<rect x="1780.19" y="629.27" width="45.21" height="18.04" fill="#ef4444"/>
<rect x="1179.50" y="648.32" width="45.21" height="18.04" fill="#ef4444"/>
<rect x="1225.71" y="648.32" width="45.21" height="18.04" fill="#ef4444"/>
<rect x="1271.91" y="648.32" width="45.21" height="18.04" fill="#ef4444"/>
<rect x="1318.12" y="648.32" width="45.21" height="18.04" fill="#ef4444"/>
<rect x="1364.33" y="648.32" width="45.21" height="18.04" fill="#ef4444"/>
<rect x="1410.54" y="648.32" width="45.21" height="18.04" fill="#ef4444"/>
<rect x="1456.74" y="648.32" width="45.21" height="18.04" fill="#ef4444"/>
<rect x="1502.95" y="648.32" width="45.21" height="18.04" fill="#ef4444"/>
<rect x="1549.16" y="648.32" width="45.21" height="18.04" fill="#ef4444"/>
<rect x="1595.36" y="648.32" width="45.21" height="18.04" fill="#ef4444"/>
<rect x="1641.57" y="648.32" width="45.21" height="18.04" fill="#ef4444"/>
<rect x="1687.78" y="648.32" width="45.21" height="18.04" fill="#ef4444"/>
<rect x="1733.99" y="648.32" width="45.21" height="18.04" fill="#ef4444"/>
<rect x="1780.19" y="648.32" width="45.21" height="18.04" fill="#ef4444"/>
<rect x="1179.50" y="667.37" width="45.21" height="18.04" fill="#ef4444"/>
<rect x="1225.71" y="667.37" width="45.21" height="18.04" fill="#ef4444"/>
<rect x="1271.91" y="667.37" width="45.21" height="18.04" fill="#ef4444"/>
<rect x="1318.12" y="667.37" width="45.21" height="18.04" fill="#ef4444"/>
<rect x="1364.33" y="667.37" width="45.21" height="18.04" fill="#ef4444"/>
<rect x="1410.54" y="667.37" width="45.21" height="18.04" fill="#ef4444"/>
<rect x="1456.74" y="667.37" width="45.21" height="18.04" fill="#ef4444"/>
<rect x="1502.95" y="667.37" width="45.21" height="18.04" fill="#ef4444"/>
<rect x="1549.16" y="667.37" width="45.21" height="18.04" fill="#ef4444"/>
<rect x="1595.36" y="667.37" width="45.21" height="18.04" fill="#ef4444"/>
<rect x="1641.57" y="667.37" width="45.21" height="18.04" fill="#ef4444"/>
<rect x="1687.78" y="667.37" width="45.21" height="18.04" fill="#ef4444"/>
<rect x="1733.99" y="667.37" width="45.21" height="18.04" fill="#ef4444"/>
<rect x="1780.19" y="667.37" width="45.21" height="18.04" fill="#ef4444"/>
<rect x="1179.50" y="686.41" width="45.21" height="18.04" fill="#ef4444"/>
<rect x="1225.71" y="686.41" width="45.21" height="18.04" fill="#ef4444"/>
<rect x="1271.91" y="686.41" width="45.21" height="18.04" fill="#ef4444"/>
<rect x="1318.12" y="686.41" width="45.21" height="18.04" fill="#ef4444"/>
<rect x="1364.33" y="686.41" width="45.21" height="18.04" fill="#ef4444"/>
<rect x="1410.54" y="686.41" width="45.21" height="18.04" fill="#ef4444"/>
<rect x="1456.74" y="686.41" width="45.21" height="18.04" fill="#ef4444"/>
<rect x="1502.95" y="686.41" width="45.21" height="18.04" fill="#ef4444"/>
<rect x="1549.16" y="686.41" width="45.21" height="18.04" fill="#ef4444"/>
<rect x="1595.36" y="686.41" width="45.21" height="18.04" fill="#ef4444"/>
<rect x="1641.57" y="686.41" width="45.21" height="18.04" fill="#ef4444"/>
<rect x="1687.78" y="686.41" width="45.21" height="18.04" fill="#ef4444"/>
<rect x="1733.99" y="686.41" width="45.21" height="18.04" fill="#ef4444"/>
<rect x="1780.19" y="686.41" width="45.21" height="18.04" fill="#ef4444"/>
<rect x="1179.50" y="705.45" width="45.21" height="18.04" fill="#ef4444"/>
<rect x="1225.71" y="705.45" width="45.21" height="18.04" fill="#ef4444"/>
<rect x="1271.91" y="705.45" width="45.21" height="18.04" fill="#ef4444"/>
<rect x="1318.12" y="705.45" width="45.21" height="18.04" fill="#ef4444"/>
<rect x="1364.33" y="705.45" width="45.21" height="18.04" fill="#ef4444"/>
<rect x="1410.54" y="705.45" width="45.21" height="18.04" fill="#ef4444"/>
<rect x="1456.74" y="705.45" width="45.21" height="18.04" fill="#ef4444"/>
<rect x="1502.95" y="705.45" width="45.21" height="18.04" fill="#ef4444"/>
<rect x="1549.16" y="705.45" width="45.21" height="18.04" fill="#ef4444"/>
<rect x="1595.36" y="705.45" width="45.21" height="18.04" fill="#ef4444"/>
<rect x="1641.57" y="705.45" width="45.21" height="18.04" fill="#ef4444"/>
<rect x="1687.78" y="705.45" width="45.21" height="18.04" fill="#ef4444"/>
<rect x="1733.99" y="705.45" width="45.21" height="18.04" fill="#ef4444"/>
<rect x="1780.19" y="705.45" width="45.21" height="18.04" fill="#ef4444"/>
<g font-size="13">
<line x1="1173" x2="1178" y1="352.5" y2="352.5" stroke="#444"/>
<text x="1170.5" y="357.1" text-anchor="end">0</text>
<line x1="1173" x2="1178" y1="371.5" y2="371.5" stroke="#444"/>
<text x="1170.5" y="376.2" text-anchor="end">5</text>
<line x1="1173" x2="1178" y1="390.5" y2="390.5" stroke="#444"/>
<text x="1170.5" y="395.2" text-anchor="end">10</text>
<line x1="1173" x2="1178" y1="409.5" y2="409.5" stroke="#444"/>
<text x="1170.5" y="414.3" text-anchor="end">15</text>
<line x1="1173" x2="1178" y1="428.5" y2="428.5" stroke="#444"/>
<text x="1170.5" y="433.3" text-anchor="end">20</text>
<line x1="1173" x2="1178" y1="447.5" y2="447.5" stroke="#444"/>
<text x="1170.5" y="452.3" text-anchor="end">25</text>
<line x1="1173" x2="1178" y1="466.5" y2="466.5" stroke="#444"/>
<text x="1170.5" y="471.4" text-anchor="end">30</text>
<line x1="1173" x2="1178" y1="485.5" y2="485.5" stroke="#444"/>
<text x="1170.5" y="490.4" text-anchor="end">35</text>
<line x1="1173" x2="1178" y1="504.5" y2="504.5" stroke="#444"/>
<text x="1170.5" y="509.5" text-anchor="end">40</text>
<line x1="1173" x2="1178" y1="524.5" y2="524.5" stroke="#444"/>
<text x="1170.5" y="528.5" text-anchor="end">45</text>
<line x1="1173" x2="1178" y1="543.5" y2="543.5" stroke="#444"/>
<text x="1170.5" y="547.6" text-anchor="end">50</text>
<line x1="1173" x2="1178" y1="562.5" y2="562.5" stroke="#444"/>
<text x="1170.5" y="566.6" text-anchor="end">55</text>
<line x1="1173" x2="1178" y1="581.5" y2="581.5" stroke="#444"/>
<text x="1170.5" y="585.7" text-anchor="end">60</text>
<line x1="1173" x2="1178" y1="600.5" y2="600.5" stroke="#444"/>
<text x="1170.5" y="604.7" text-anchor="end">65</text>
<line x1="1173" x2="1178" y1="619.5" y2="619.5" stroke="#444"/>
<text x="1170.5" y="623.8" text-anchor="end">70</text>
<line x1="1173" x2="1178" y1="638.5" y2="638.5" stroke="#444"/>
<text x="1170.5" y="642.8" text-anchor="end">75</text>
<line x1="1173" x2="1178" y1="657.5" y2="657.5" stroke="#444"/>
<text x="1170.5" y="661.8" text-anchor="end">80</text>
<line x1="1173" x2="1178" y1="676.5" y2="676.5" stroke="#444"/>
<text x="1170.5" y="680.9" text-anchor="end">85</text>
<line x1="1173" x2="1178" y1="695.5" y2="695.5" stroke="#444"/>
<text x="1170.5" y="699.9" text-anchor="end">90</text>
<line x1="1173" x2="1178" y1="714.5" y2="714.5" stroke="#444"/>
<text x="1170.5" y="719.0" text-anchor="end">95</text>
<line x1="1202.5" x2="1202.5" y1="726" y2="731" stroke="#444"/>
<text x="1202.1" y="745.6" text-anchor="middle">0</text>
<line x1="1248.5" x2="1248.5" y1="726" y2="731" stroke="#444"/>
<text x="1248.3" y="745.6" text-anchor="middle">1</text>
<line x1="1294.5" x2="1294.5" y1="726" y2="731" stroke="#444"/>
<text x="1294.5" y="745.6" text-anchor="middle">2</text>
<line x1="1340.5" x2="1340.5" y1="726" y2="731" stroke="#444"/>
<text x="1340.7" y="745.6" text-anchor="middle">3</text>
<line x1="1386.5" x2="1386.5" y1="726" y2="731" stroke="#444"/>
<text x="1386.9" y="745.6" text-anchor="middle">4</text>
<line x1="1433.5" x2="1433.5" y1="726" y2="731" stroke="#444"/>
<text x="1433.1" y="745.6" text-anchor="middle">5</text>
<line x1="1479.5" x2="1479.5" y1="726" y2="731" stroke="#444"/>
<text x="1479.3" y="745.6" text-anchor="middle">6</text>
<line x1="1525.5" x2="1525.5" y1="726" y2="731" stroke="#444"/>
<text x="1525.6" y="745.6" text-anchor="middle">7</text>
<line x1="1571.5" x2="1571.5" y1="726" y2="731" stroke="#444"/>
<text x="1571.8" y="745.6" text-anchor="middle">8</text>
<line x1="1617.5" x2="1617.5" y1="726" y2="731" stroke="#444"/>
<text x="1618.0" y="745.6" text-anchor="middle">9</text>
<line x1="1664.5" x2="1664.5" y1="726" y2="731" stroke="#444"/>
<text x="1664.2" y="745.6" text-anchor="middle">10</text>
<line x1="1710.5" x2="1710.5" y1="726" y2="731" stroke="#444"/>
<text x="1710.4" y="745.6" text-anchor="middle">11</text>
<line x1="1756.5" x2="1756.5" y1="726" y2="731" stroke="#444"/>
<text x="1756.6" y="745.6" text-anchor="middle">12</text>
<line x1="1802.5" x2="1802.5" y1="726" y2="731" stroke="#444"/>
<text x="1802.8" y="745.6" text-anchor="middle">13</text>
</g>
<text x="1447.3" y="762" font-size="14.5" textLength="110.6" lengthAdjust="spacing">Dogleg Severity</text>
<text transform="translate(1143.4,570.2) rotate(-90)" font-size="14.5" textLength="72.4" lengthAdjust="spacing">Inclination</text>
</g>
<g id="bars">
<line x1="458.2" x2="458.2" y1="984.7" y2="1080" stroke="#ededed" stroke-width="1"/>
<line x1="531.1" x2="531.1" y1="984.7" y2="1080" stroke="#ededed" stroke-width="1"/>
<line x1="604.0" x2="604.0" y1="984.7" y2="1080" stroke="#ededed" stroke-width="1"/>
<line x1="676.9" x2="676.9" y1="984.7" y2="1080" stroke="#ededed" stroke-width="1"/>
<line x1="749.8" x2="749.8" y1="984.7" y2="1080" stroke="#ededed" stroke-width="1"/>
<line x1="822.7" x2="822.7" y1="984.7" y2="1080" stroke="#ededed" stroke-width="1"/>
<line x1="895.6" x2="895.6" y1="984.7" y2="1080" stroke="#ededed" stroke-width="1"/>
<line x1="968.5" x2="968.5" y1="984.7" y2="1080" stroke="#ededed" stroke-width="1"/>
<line x1="1041.4" x2="1041.4" y1="984.7" y2="1080" stroke="#ededed" stroke-width="1"/>
<line x1="385" x2="385" y1="984.7" y2="1080" stroke="#333" stroke-width="1.2"/>
<rect x="384.6" y="989.60" width="104.90" height="4.1" fill="#1f2d5c"/>
<rect x="384.6" y="993.82" width="18.20" height="4.1" fill="#1f2d5c"/>
<rect x="384.6" y="998.05" width="9.30" height="4.1" fill="#1f2d5c"/>
<rect x="384.6" y="1002.27" width="51.40" height="4.1" fill="#1f2d5c"/>
<rect x="384.6" y="1006.50" width="51.40" height="4.1" fill="#1f2d5c"/>
<rect x="384.6" y="1010.72" width="47.10" height="4.1" fill="#1f2d5c"/>
<rect x="384.6" y="1014.94" width="11.90" height="4.1" fill="#1f2d5c"/>
<rect x="384.6" y="1019.17" width="36.20" height="4.1" fill="#1f2d5c"/>
<rect x="384.6" y="1023.39" width="106.10" height="4.1" fill="#1f2d5c"/>
<rect x="384.6" y="1027.62" width="9.90" height="4.1" fill="#1f2d5c"/>
<rect x="384.6" y="1031.84" width="38.10" height="4.1" fill="#1f2d5c"/>
<rect x="384.6" y="1036.06" width="6.60" height="4.1" fill="#1f2d5c"/>
<rect x="384.6" y="1040.29" width="9.80" height="4.1" fill="#1f2d5c"/>
<rect x="384.6" y="1044.51" width="20.40" height="4.1" fill="#1f2d5c"/>
<rect x="384.6" y="1048.74" width="53.60" height="4.1" fill="#1f2d5c"/>
<rect x="384.6" y="1052.96" width="24.20" height="4.1" fill="#1f2d5c"/>
<rect x="384.6" y="1057.18" width="59.10" height="4.1" fill="#1f2d5c"/>
<rect x="384.6" y="1061.41" width="44.20" height="4.1" fill="#1f2d5c"/>
<rect x="384.6" y="1065.63" width="51.90" height="4.1" fill="#1f2d5c"/>
<rect x="384.6" y="1069.86" width="88.10" height="4.1" fill="#1f2d5c"/>
<rect x="384.6" y="1074.08" width="89.80" height="4.1" fill="#1f2d5c"/>
<rect x="384.6" y="1078.30" width="103.20" height="4.1" fill="#1f2d5c"/>
<rect x="384.6" y="1082.53" width="95.40" height="4.1" fill="#1f2d5c"/>
<rect x="384.6" y="1086.75" width="85.40" height="4.1" fill="#1f2d5c"/>
<g font-size="13" text-anchor="end">
<text x="381.5" y="989.2">0</text><text x="381.5" y="1031.9">1000</text><text x="381.5" y="1074.6">2000</text>
</g></g>
<defs><clipPath id="c3"><rect x="305" y="300" width="766" height="465"/></clipPath></defs>
<g id="d3" clip-path="url(#c3)">
<text x="687.9" y="343.5" font-size="17" text-anchor="middle" textLength="203" lengthAdjust="spacing">3D Wellbore Visualization</text>
<line x1="552.50" y1="439.95" x2="559.47" y2="676.77" stroke="#eceef3" stroke-width="1"/>
<line x1="559.28" y1="676.84" x2="762.73" y2="745.66" stroke="#eceef3" stroke-width="1"/>
<line x1="594.70" y1="445.91" x2="599.34" y2="664.19" stroke="#eceef3" stroke-width="1"/>
<line x1="599.12" y1="664.26" x2="795.95" y2="721.41" stroke="#eceef3" stroke-width="1"/>
<line x1="614.00" y1="448.63" x2="617.68" y2="658.40" stroke="#eceef3" stroke-width="1"/>
<line x1="617.47" y1="658.47" x2="810.59" y2="710.71" stroke="#eceef3" stroke-width="1"/>
<line x1="631.10" y1="451.04" x2="633.97" y2="653.26" stroke="#eceef3" stroke-width="1"/>
<line x1="633.80" y1="653.31" x2="823.30" y2="701.43" stroke="#eceef3" stroke-width="1"/>
<line x1="647.30" y1="453.33" x2="649.46" y2="648.37" stroke="#eceef3" stroke-width="1"/>
<line x1="649.34" y1="648.41" x2="835.10" y2="692.81" stroke="#eceef3" stroke-width="1"/>
<line x1="687.70" y1="455.65" x2="688.24" y2="643.50" stroke="#eceef3" stroke-width="1"/>
<line x1="523.20" y1="698.77" x2="688.37" y2="643.52" stroke="#eceef3" stroke-width="1"/>
<line x1="750.30" y1="449.77" x2="748.11" y2="656.46" stroke="#eceef3" stroke-width="1"/>
<line x1="588.84" y1="725.77" x2="748.54" y2="656.55" stroke="#eceef3" stroke-width="1"/>
<line x1="786.20" y1="446.40" x2="782.21" y2="663.84" stroke="#eceef3" stroke-width="1"/>
<line x1="628.51" y1="742.09" x2="782.64" y2="663.94" stroke="#eceef3" stroke-width="1"/>
<line x1="503.59" y1="564.70" x2="673.85" y2="549.56" stroke="#eceef3" stroke-width="1"/>
<line x1="673.86" y1="549.74" x2="857.68" y2="561.35" stroke="#eceef3" stroke-width="1"/>
<line x1="508.29" y1="682.60" x2="674.36" y2="633.21" stroke="#eceef3" stroke-width="1"/>
<line x1="674.36" y1="633.24" x2="853.92" y2="669.91" stroke="#eceef3" stroke-width="1"/>
<line x1="498.30" y1="432.30" x2="508.70" y2="692.80" stroke="#c9ced8" stroke-width="1"/>
<line x1="508.70" y1="692.80" x2="717.50" y2="778.70" stroke="#c9ced8" stroke-width="1"/>
<line x1="853.60" y1="679.30" x2="717.50" y2="778.70" stroke="#c9ced8" stroke-width="1"/>
<polyline points="498.62,440.30 673.33,462.55 861.64,446.68" fill="none" stroke="#7d8798" stroke-width="1"/>
<line x1="574.40" y1="443.04" x2="580.13" y2="670.26" stroke="#7d8798" stroke-width="1"/>
<line x1="579.90" y1="670.33" x2="780.18" y2="732.92" stroke="#7d8798" stroke-width="1"/>
<line x1="717.50" y1="452.85" x2="716.80" y2="649.68" stroke="#7d8798" stroke-width="1"/>
<line x1="553.91" y1="711.40" x2="717.13" y2="649.75" stroke="#7d8798" stroke-width="1"/>
<polyline points="621.0,445.0 622.2,452.4 623.3,461.6 623.3,475.5 622.8,489.4 621.8,499.8 620.3,504.5 616.6,510.3 613.2,516.1 611.4,523.0 610.3,533.4 609.6,546.0 610.1,549.3 612.9,553.6 621.5,559.4 631.6,565.8 641.6,572.3 651.7,579.5 663.2,587.4 670.4,592.4 676.1,598.1 681.1,606.7 683.0,612.5 683.6,615.4 682.7,622.5 682.7,636.9" fill="none" stroke="#22b34f" stroke-width="2.2" stroke-linejoin="round" stroke-linecap="round"/>
<polyline points="682.7,636.9 684.0,639.8 684.0,648.4 684.7,654.9" fill="none" stroke="#d4a20c" stroke-width="2.2" stroke-linejoin="round" stroke-linecap="round"/>
<polyline points="684.7,654.9 686.9,660.0 693.3,665.6 699.1,669.2 707.7,675.0 709.9,677.1 712.0,682.1 719.2,687.2 724.9,688.6 730.7,690.7" fill="none" stroke="#dc3d33" stroke-width="2.2" stroke-linejoin="round" stroke-linecap="round"/>
<polyline points="609.7,548.6 610.2,549.8" fill="none" stroke="#c9a514" stroke-width="2.2" stroke-linejoin="round" stroke-linecap="round"/>
<polyline points="680.8,606.2 681.3,607.4" fill="none" stroke="#c9a514" stroke-width="2.2" stroke-linejoin="round" stroke-linecap="round"/>
<polyline points="711.6,681.4 712.3,682.6" fill="none" stroke="#c9a514" stroke-width="2.2" stroke-linejoin="round" stroke-linecap="round"/>
<text transform="translate(476.3,437) rotate(-3) skewX(-12)" text-anchor="middle" dominant-baseline="central" font-size="13">0</text>
<text transform="translate(482.3,567.4) rotate(-5)" text-anchor="middle" dominant-baseline="central" font-size="13" >5000</text>
<text transform="translate(488.1,690.8) rotate(-22)" text-anchor="middle" dominant-baseline="central" font-size="13" >10000</text>
<text transform="translate(443.8,571.9) rotate(87.6)" text-anchor="middle" dominant-baseline="central" font-size="15.5" textLength="162" lengthAdjust="spacing">True Vertical Depth (ft)</text>
<text transform="translate(502.7,705.0) rotate(-22)" text-anchor="middle" dominant-baseline="central" font-size="13" >-2000</text>
<text transform="translate(532.4,719.6) rotate(-25)" text-anchor="middle" dominant-baseline="central" font-size="13" >0</text>
<text transform="translate(566.6,735.0) rotate(-30)" text-anchor="middle" dominant-baseline="central" font-size="13" >2000</text>
<text transform="translate(607.4,752.4) rotate(-31)" text-anchor="middle" dominant-baseline="central" font-size="13" >4000</text>
<text transform="translate(857.5,699.0) rotate(22)" text-anchor="middle" dominant-baseline="central" font-size="13" >-400</text>
<text transform="translate(845.8,707.0) rotate(22)" text-anchor="middle" dominant-baseline="central" font-size="13" >-300</text>
<text transform="translate(834.0,718.5) rotate(22)" text-anchor="middle" dominant-baseline="central" font-size="13" >-200</text>
<text transform="translate(821.0,729.5) rotate(22)" text-anchor="middle" dominant-baseline="central" font-size="13" >-100</text>
<text transform="translate(809.3,742.0) rotate(22)" text-anchor="middle" dominant-baseline="central" font-size="13" >0</text>
<text transform="translate(787.2,756.3) rotate(22)" text-anchor="middle" dominant-baseline="central" font-size="13" >100</text>
<text transform="translate(484,724) rotate(29)" font-size="16" letter-spacing="1.3" dominant-baseline="hanging">North/South (ft)</text>
<text transform="translate(837,774) rotate(-41.5)" font-size="16" letter-spacing="0.1">East/West (ft)</text>
</g>
</svg>
<div class="abs" style="left:1848px;top:1008px;width:48px;height:48px;border-radius:50%;background:#fff;border:1px solid #e8e8e8;box-shadow:0 4px 14px rgba(0,0,0,.12),0 1px 3px rgba(0,0,0,.06)"></div><svg class="abs" style="left:1862px;top:1022px" width="20" height="20" viewBox="0 0 24 24" fill="none" stroke="#0a0a0a" stroke-width="2" stroke-linecap="round" stroke-linejoin="round" ><circle cx="12" cy="12" r="10"/><path d="M9.09 9a3 3 0 0 1 5.83 1c0 2-3 3-3 3"/><path d="M12 17h.01"/></svg>
</body></html>
